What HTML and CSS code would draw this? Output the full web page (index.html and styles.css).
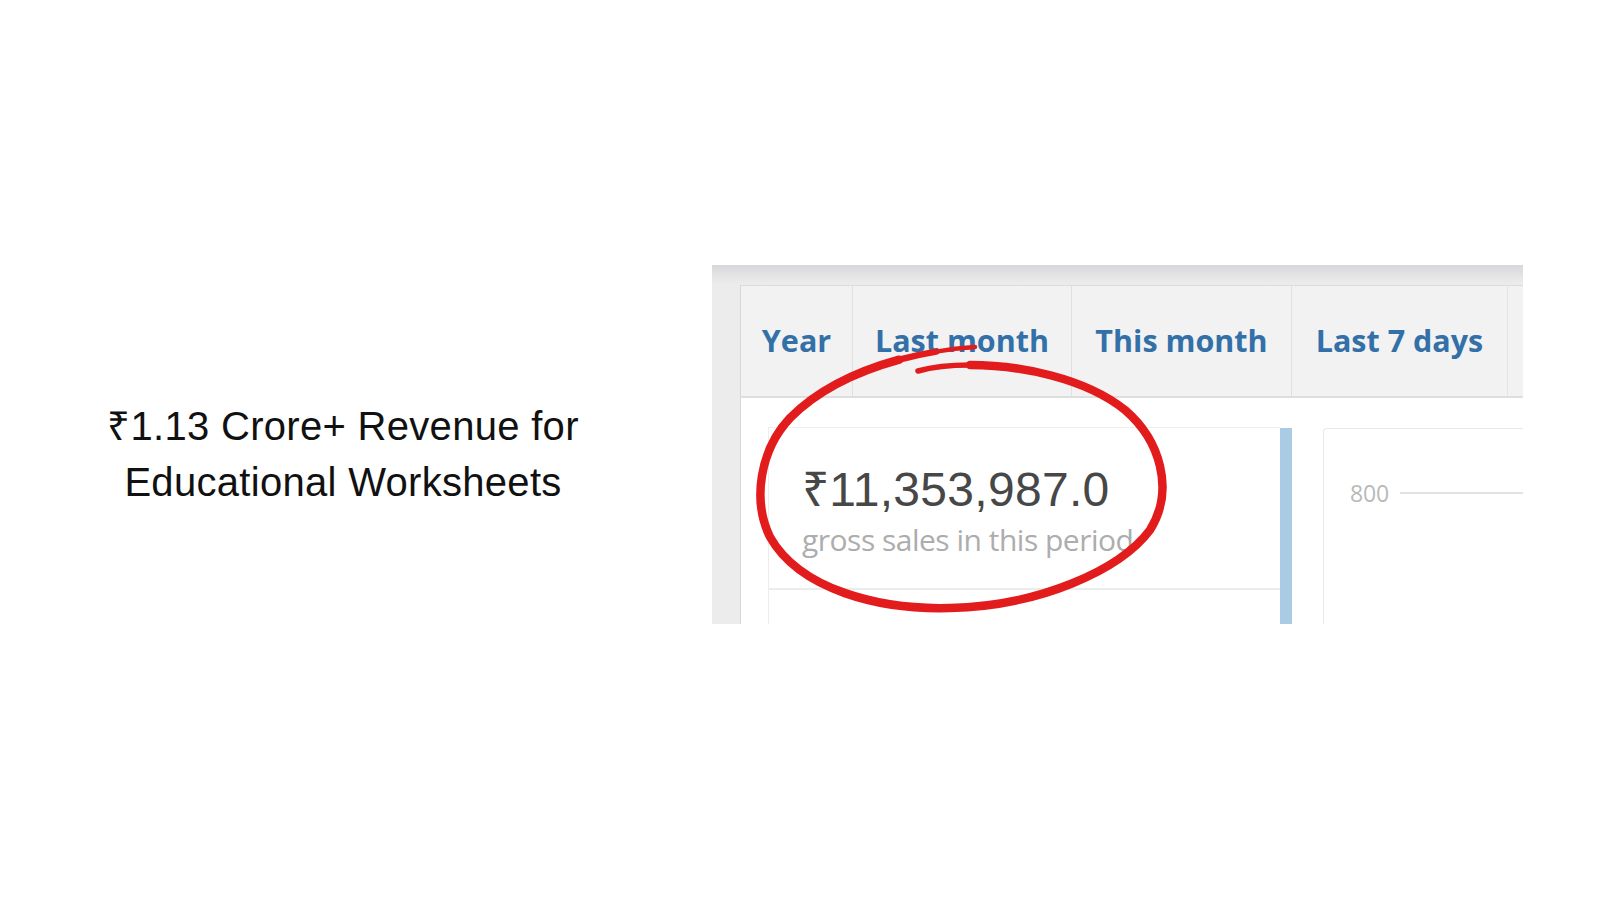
FILE: index.html
```html
<!DOCTYPE html>
<html lang="en">
<head>
<meta charset="utf-8">
<title>Revenue</title>
<link rel="stylesheet" href="styles.css">
</head>
<body>
<div class="page">
  <div class="intro">
    <h1 class="headline">₹1.13 Crore+ Revenue for<br>Educational Worksheets</h1>
  </div>
  <div class="shot">
    <div class="frame">
      <div class="tabs">
        <div class="tab tab-year">Year</div>
        <div class="tab tab-last">Last month</div>
        <div class="tab tab-this">This month</div>
        <div class="tab tab-seven">Last 7 days</div>
      </div>
      <div class="panel">
        <div class="stats">
          <div class="stat-card">
            <div class="amount">₹11,353,987.0</div>
            <div class="caption">gross sales in this period</div>
          </div>
          <div class="stat-card stat-next"></div>
        </div>
        <div class="accent"></div>
        <div class="chart">
          <div class="axis-row">
            <span class="axis-label">800</span>
            <span class="axis-line"></span>
          </div>
        </div>
      </div>
    </div>
  </div>
  <svg class="scribble" viewBox="0 0 1600 900" width="1600" height="900" aria-hidden="true">
    <g fill="none" stroke="#e21c1c" stroke-linecap="round" stroke-linejoin="round">
      <path d="M 975 347 C 961.9 347.9, 948.9 349.4, 936.2 351.6" stroke-width="4.5"/>
      <path d="M 936.2 351.6 C 923.5 353.7, 911.15 356.45, 899.2 359.7" stroke-width="6.5"/>
      <path d="M 899.2 359.7 C 854.7 371.9, 816 392, 790 418 C 760 450, 752 500, 770 537 C 800 590, 880 610, 950 608 C 1040 606, 1120 570, 1150 530 C 1175 490, 1160 440, 1125 410 C 1085 378, 1020 365, 970 365" stroke-width="8.5"/>
      <path d="M 970 365 C 950 365, 932 367, 918 371" stroke-width="5.5"/>
    </g>
  </svg>
</div>
</body>
</html>
```
FILE: styles.css
```css
html, body {
  margin: 0;
  padding: 0;
  background: #ffffff;
}

.page {
  position: relative;
  width: 1600px;
  height: 900px;
  box-sizing: border-box;
  padding-top: 265px;
  display: flex;
  align-items: flex-start;
  overflow: hidden;
}

.intro {
  width: 686px;
  padding-top: 133px;
  text-align: center;
}

.headline {
  margin: 0;
  font-family: "Liberation Sans", Arial, sans-serif;
  font-weight: 400;
  font-size: 40px;
  line-height: 56px;
  letter-spacing: 0.3px;
  color: #111111;
}

.shot {
  flex-shrink: 0;
  margin-left: 26px;
  width: 811px;
  height: 359px;
  overflow: hidden;
  background: linear-gradient(to bottom, #d6d7d9 0px, #e6e6e7 12px, #ececec 20px, #ececec 100%);
  box-sizing: border-box;
  padding-top: 20px;
  padding-left: 28px;
}

.frame {
  display: flex;
  flex-direction: column;
  height: 100%;
}

.tabs {
  flex-shrink: 0;
  display: flex;
  height: 113px;
  box-sizing: border-box;
  background: #f2f2f3;
  border-top: 1px solid #dcdcdc;
  border-left: 1px solid #d6d6d6;
  border-bottom: 2px solid #dedede;
}

.tab {
  display: flex;
  align-items: center;
  justify-content: center;
  box-sizing: border-box;
  border-right: 1px solid #e0e0e0;
  font-family: "Open Sans", "Noto Sans", sans-serif;
  font-weight: 700;
  font-size: 30.5px;
  color: #3470a8;
  padding-bottom: 2px;
}

.tab-year { width: 112px; }
.tab-last { width: 219px; }
.tab-this { width: 220px; }
.tab-seven { width: 216px; border-right: 1px solid #e4e4e4; }

.panel {
  flex: 1;
  display: flex;
  background: #ffffff;
  border-left: 1px solid #d6d6d6;
  padding-top: 29px;
  padding-left: 27px;
}

.stats {
  width: 512px;
  display: flex;
  flex-direction: column;
}

.stat-card {
  box-sizing: border-box;
  height: 163px;
  border-top: 1px solid #ededed;
  border-left: 1px solid #ededed;
  border-bottom: 2px solid #ececec;
  padding-top: 38px;
  padding-left: 33px;
}

.stat-next {
  flex: 1;
  border-top: none;
  border-bottom: none;
}

.amount {
  font-family: "Liberation Sans", Arial, sans-serif;
  font-size: 48px;
  line-height: 48px;
  letter-spacing: 0.3px;
  color: #474747;
}

.caption {
  margin-top: 8px;
  font-family: "Open Sans", "Noto Sans", sans-serif;
  font-weight: 400;
  font-size: 30px;
  line-height: 36px;
  letter-spacing: -0.5px;
  color: #adadad;
}

.accent {
  width: 12px;
  margin-top: 1px;
  background: #a9cce4;
}

.chart {
  flex: 1;
  margin-left: 31px;
  margin-top: 1px;
  border-top: 1px solid #e8e8e8;
  border-left: 1px solid #e8e8e8;
  border-top-left-radius: 4px;
  padding-top: 50px;
  padding-left: 26px;
}

.axis-row {
  display: flex;
  align-items: center;
}

.axis-label {
  font-family: "Open Sans", "Noto Sans", sans-serif;
  font-size: 23px;
  line-height: 28px;
  letter-spacing: -0.2px;
  color: #b9b9b9;
}

.axis-line {
  flex: 1;
  height: 2px;
  margin-left: 11px;
  background: #e2e2e2;
}

.scribble {
  position: absolute;
  left: 0;
  top: 0;
  pointer-events: none;
}
```
